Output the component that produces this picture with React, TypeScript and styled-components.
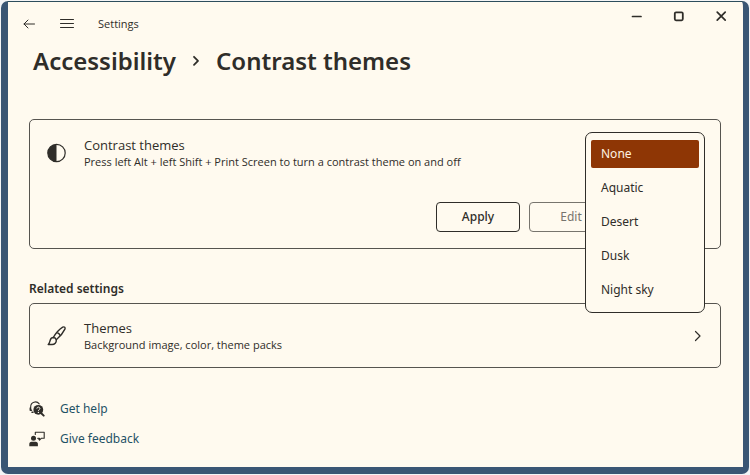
import React, { useState } from "react";
import styled, { createGlobalStyle } from "styled-components";

const ink = "#2f2d29";
const paper = "#fffaef";

const GlobalStyle = createGlobalStyle`
  *, *::before, *::after { box-sizing: border-box; }
  html { height: 100%; }
  body {
    margin: 0;
    min-height: 100%;
    background: #f4f5f6;
    color: ${ink};
    font-family: "Noto Sans", "Open Sans", sans-serif;
    font-size: 12px;
    line-height: 16px;
  }
  button { font: inherit; color: inherit; cursor: pointer; }
`;

const Window = styled.main`
  min-height: calc(100vh - 2px);
  margin: 1px 1px 0;
  padding-bottom: 20px;
  background: ${paper};
  border: 7px solid #3a5674;
  border-top: 1px solid #2d4d5c;
  border-right-width: 6px;
  border-radius: 7px;
`;

const TitleBar = styled.header`
  display: flex;
  align-items: center;
  gap: 22px;
  height: 42px;
  padding: 2px 15px 0 14px;
`;

const AppName = styled.span`
  font-family: "Open Sans", "Noto Sans", sans-serif;
  font-size: 11px;
  margin-left: 1px;
`;

const IconButton = styled.button`
  display: flex;
  padding: 0;
  border: 0;
  background: none;
`;

const WindowControls = styled.div`
  display: flex;
  gap: 28px;
  margin-left: auto;
  padding-bottom: 16px;
`;

const Content = styled.div`
  padding: 0 22px 0 21px;
`;

const Breadcrumb = styled.h1`
  display: flex;
  align-items: center;
  gap: 15px;
  margin: 0 0 41px;
  padding-left: 4px;
  font-size: 24px;
  line-height: 34px;
  font-weight: 600;
`;

const Card = styled.section`
  border: 1px solid #56544f;
  border-radius: 5px;
`;

const CardRow = styled.div`
  display: flex;
  align-items: center;
  gap: 16px;
  padding: 15px 15px 15px 16px;
`;

const CardIcon = styled.span`
  display: flex;
  flex: none;
  width: 22px;
`;

const CardText = styled.div`
  flex: 1;
  text-align: left;
`;

const CardTitle = styled.div`
  font-family: "Open Sans", "Noto Sans", sans-serif;
  font-size: 13px;
  line-height: 18px;
`;

const CardNote = styled.div`
  font-family: "Open Sans", "Noto Sans", sans-serif;
  font-size: 11px;
  line-height: 15px;
`;

const SelectBox = styled.div`
  position: relative;
  width: 120px;
`;

const SelectTrigger = styled.button`
  width: 100%;
  height: 32px;
  padding: 0 16px;
  border: 1px solid ${ink};
  border-radius: 5px;
  background: ${paper};
  text-align: left;
`;

const Menu = styled.div`
  position: absolute;
  top: -3px;
  right: 0;
  z-index: 1;
  width: 120px;
  padding: 7px 5px 8px;
  display: grid;
  gap: 6px;
  border: 1px solid ${ink};
  border-radius: 7px;
  background: ${paper};
`;

const MenuItem = styled.button<{ $active: boolean }>`
  height: 28px;
  padding: 0 10px;
  border: 0;
  border-radius: 2px;
  background: ${(p) => (p.$active ? "#8e3605" : "transparent")};
  color: ${(p) => (p.$active ? "#fff3e2" : ink)};
  text-align: left;
`;

const Actions = styled.div`
  display: flex;
  justify-content: flex-end;
  gap: 9px;
  padding: 17px 107px 16px 16px;
`;

const ActionButton = styled.button`
  width: 84px;
  height: 30px;
  padding: 0;
  border: 1px solid ${ink};
  border-radius: 4px;
  background: transparent;
  font-weight: 500;

  &:disabled {
    color: #77746d;
    border-color: #77746d;
    font-weight: 400;
  }
`;

const SectionTitle = styled.h2`
  margin: 31px 0 6px;
  font-size: 12px;
  line-height: 17px;
  font-weight: 600;
`;

const LinkCard = styled.a`
  display: block;
  border: 1px solid #56544f;
  border-radius: 5px;
  color: inherit;
  text-decoration: none;
`;

const Links = styled.nav`
  display: grid;
  gap: 14px;
  margin-top: 33px;
`;

const HelpLink = styled.a`
  display: flex;
  align-items: center;
  gap: 15px;
  justify-self: start;
  color: #1f5266;
  text-decoration: none;
`;

const stroke = { fill: "none", stroke: ink, strokeLinecap: "round", strokeLinejoin: "round" } as const;

const BackIcon = () => (
  <svg width="15" height="12" viewBox="0 0 15 12" {...stroke}>
    <path d="M12.5 6H2M6 2 2 6l4 4" />
  </svg>
);

const MenuIcon = () => (
  <svg width="16" height="12" viewBox="0 0 16 12" {...stroke}>
    <path d="M1.5 1.5h13M1.5 5.5h13M1.5 9.5h13" />
  </svg>
);

const MinimizeIcon = () => (
  <svg width="15" height="13" viewBox="0 0 15 13" {...stroke} strokeWidth="1.7">
    <path d="M3.5 6.5h8.5" />
  </svg>
);

const MaximizeIcon = () => (
  <svg width="14" height="13" viewBox="0 0 14 13" {...stroke} strokeWidth="1.8">
    <rect x="2.8" y="2.3" width="8" height="8" rx="1.2" />
  </svg>
);

const CloseIcon = () => (
  <svg width="14" height="13" viewBox="0 0 14 13" {...stroke} strokeWidth="1.7">
    <path d="m3.2 2.2 8 8m0-8-8 8" />
  </svg>
);

const CrumbChevron = () => (
  <svg width="10" height="14" viewBox="0 0 10 14" {...stroke} strokeWidth="1.8">
    <path d="m3 2.8 4 4-4 4" />
  </svg>
);

const ChevronIcon = () => (
  <svg width="15" height="14" viewBox="0 0 15 14" {...stroke} strokeWidth="1.2">
    <path d="m5.5 2.5 4.5 4.5-4.5 4.5" />
  </svg>
);

const ContrastIcon = () => (
  <svg width="20" height="20" viewBox="0 0 20 20">
    <circle cx="10.5" cy="10" r="8.7" fill="none" stroke={ink} strokeWidth="1.2" />
    <path d="M10.5 1.3a8.7 8.7 0 0 0 0 17.4z" fill={ink} />
  </svg>
);

const BrushIcon = () => (
  <svg width="22" height="22" viewBox="0 0 22 22" {...stroke} strokeWidth="1.4">
    <path d="M7.3 12.5C9.8 8.3 13.5 4.2 16.7 2.2c1.7-.9 3 .2 2.2 1.900-1.700 3.500-5 7.700-8.600 10.700" />
    <path d="M7.300 12.500c1.700.1 2.700 1 3 2.300.3 2.700-1.700 4.700-4.200 4.700H2.200c1.400-1 1.500-2.500 2-4.300.5-1.700 1.600-2.700 3.100-2.700z" />
    <path d="M11.800 8c1.200.5 2 1.300 2.400 2.400" />
  </svg>
);

const HelpIcon = () => (
  <svg width="16" height="16" viewBox="0 0 16 16">
    <g {...stroke} strokeWidth="1.1">
      <path d="M1.700 8.500V5.700a4.700 4.700 0 0 1 8.500-2.800" />
      <path d="M1.300 7v2.300h1.200M3 11.200h1" strokeWidth="1.5" />
      <path d="m12.500 12.500 2.200 2.200" strokeWidth="1.9" />
    </g>
    <circle cx="9.3" cy="8.8" r="4.9" fill={ink} />
    <path d="M7.900 7.600c0-2 3-1.900 3 0 0 1.100-1.500 1.100-1.500 2.300" fill="none" stroke={paper} strokeWidth="1" />
    <circle cx="9.4" cy="11.4" r=".7" fill={paper} />
  </svg>
);

const FeedbackIcon = () => (
  <svg width="16" height="16" viewBox="0 0 16 16">
    <circle cx="4.5" cy="7.2" r="2.5" fill={ink} />
    <path d="M.3 15.300v-2.200c0-1.400.8-2.300 2.200-2.300h4.200c1.400 0 2.200.9 2.200 2.300v2.200z" fill={ink} />
    <path d="M6.300 3.500V1.300h8.900v5.900h-2.700l-2 2V7.200H8.800" {...stroke} strokeWidth="1.1" />
    <path d="M8.300 7.300h1.500v2z" fill={ink} />
  </svg>
);

const themes = ["None", "Aquatic", "Desert", "Dusk", "Night sky"];

export default function App() {
  const [theme, setTheme] = useState("None");
  const [open, setOpen] = useState(true);

  return (
    <>
      <GlobalStyle />
      <Window>
        <TitleBar>
          <IconButton aria-label="Back"><BackIcon /></IconButton>
          <IconButton aria-label="Open navigation"><MenuIcon /></IconButton>
          <AppName>Settings</AppName>
          <WindowControls>
            <IconButton aria-label="Minimize"><MinimizeIcon /></IconButton>
            <IconButton aria-label="Maximize"><MaximizeIcon /></IconButton>
            <IconButton aria-label="Close"><CloseIcon /></IconButton>
          </WindowControls>
        </TitleBar>
        <Content>
          <Breadcrumb>
            <span>Accessibility</span>
            <CrumbChevron />
            <span>Contrast themes</span>
          </Breadcrumb>
          <Card>
            <CardRow>
              <CardIcon><ContrastIcon /></CardIcon>
              <CardText>
                <CardTitle id="theme-label">Contrast themes</CardTitle>
                <CardNote>Press left Alt + left Shift + Print Screen to turn a contrast theme on and off</CardNote>
              </CardText>
              <SelectBox>
                <SelectTrigger
                  aria-haspopup="listbox"
                  aria-expanded={open}
                  aria-labelledby="theme-label"
                  onClick={() => setOpen(true)}
                >
                  {open ? null : theme}
                </SelectTrigger>
                {open && (
                  <Menu role="listbox" aria-labelledby="theme-label">
                    {themes.map((name) => (
                      <MenuItem
                        key={name}
                        role="option"
                        aria-selected={name === theme}
                        $active={name === theme}
                        onClick={() => {
                          setTheme(name);
                          setOpen(false);
                        }}
                      >
                        {name}
                      </MenuItem>
                    ))}
                  </Menu>
                )}
              </SelectBox>
            </CardRow>
            <Actions>
              <ActionButton>Apply</ActionButton>
              <ActionButton disabled>Edit</ActionButton>
            </Actions>
          </Card>
          <SectionTitle>Related settings</SectionTitle>
          <LinkCard href="#themes">
            <CardRow>
              <CardIcon><BrushIcon /></CardIcon>
              <CardText>
                <CardTitle>Themes</CardTitle>
                <CardNote>Background image, color, theme packs</CardNote>
              </CardText>
              <ChevronIcon />
            </CardRow>
          </LinkCard>
          <Links>
            <HelpLink href="#help"><HelpIcon />Get help</HelpLink>
            <HelpLink href="#feedback"><FeedbackIcon />Give feedback</HelpLink>
          </Links>
        </Content>
      </Window>
    </>
  );
}
